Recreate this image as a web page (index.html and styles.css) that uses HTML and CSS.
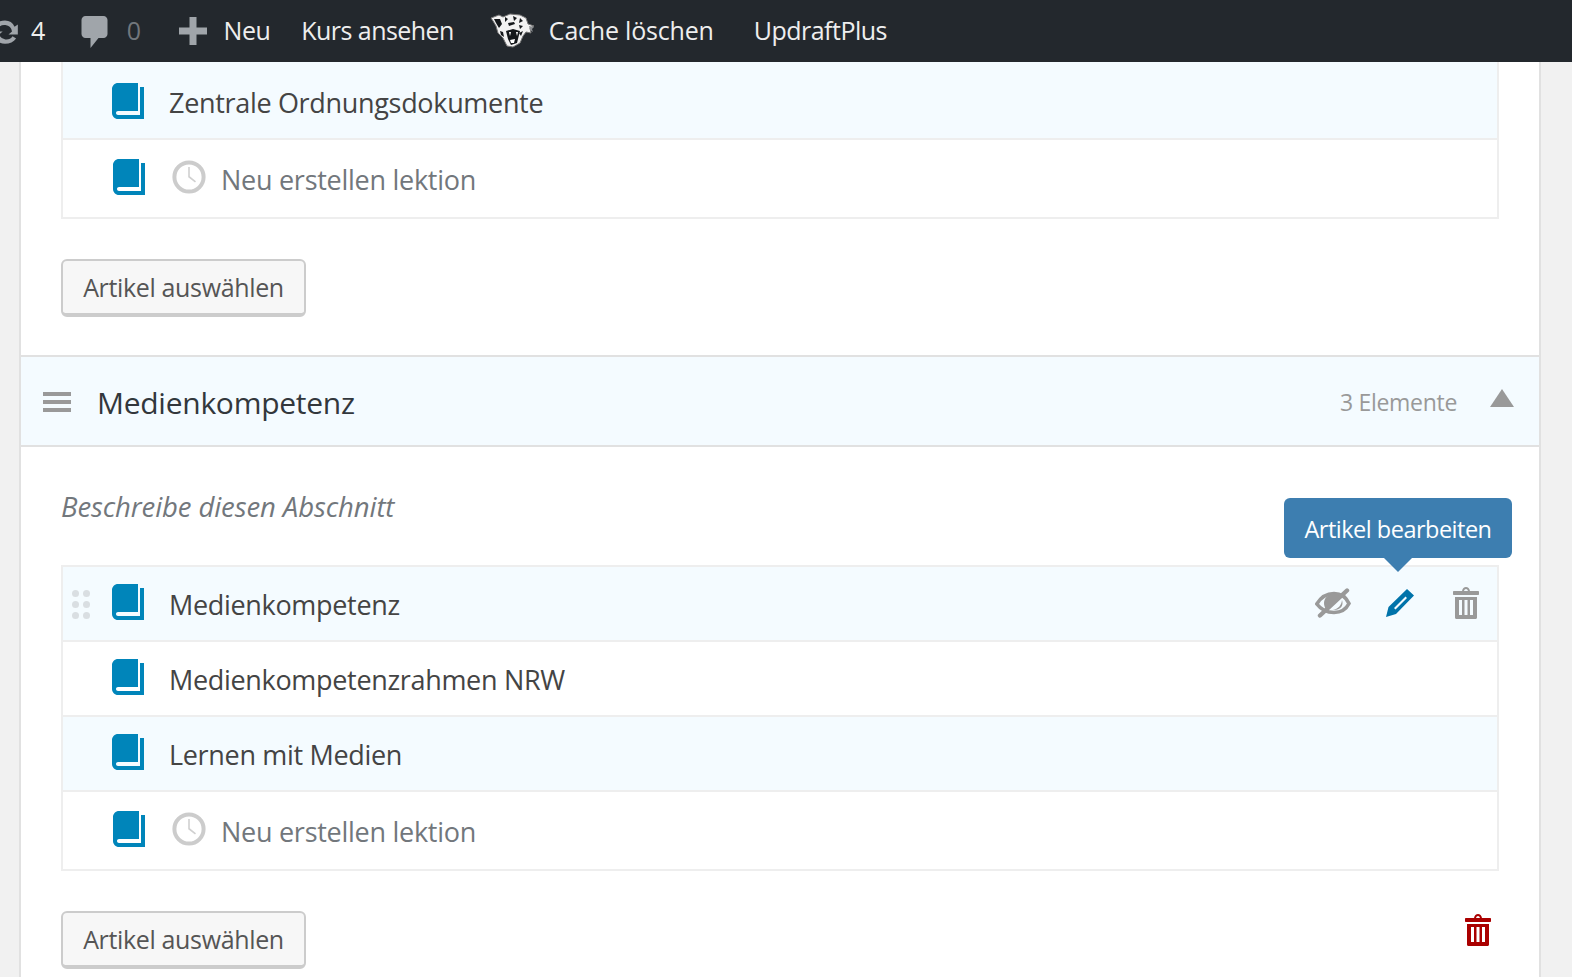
FILE: index.html
```html
<!DOCTYPE html>
<html lang="de">
<head>
<meta charset="utf-8">
<title>Kurs bearbeiten</title>
<link rel="stylesheet" href="styles.css">
</head>
<body>
<svg class="defs" width="0" height="0" aria-hidden="true">
  <symbol id="book" viewBox="2 1 16 18"><path d="M16 3h2v16H5c-1.66 0-3-1.34-3-3V4c0-1.66 1.34-3 3-3h10v14H5c-.55 0-1 .45-1 1s.45 1 1 1h11V3z"/></symbol>
  <symbol id="clock" viewBox="0 0 34 34"><circle cx="17" cy="17" r="14.600" fill="none" stroke="currentColor" stroke-width="4"/><path d="M16.200 7h1.600v9.300l6.200 5-1 1.300-6.800-5.400z"/></symbol>
  <symbol id="trash" viewBox="0 0 26 32"><path fill-rule="evenodd" d="M9 4C9.500 1.500 11 0 13 0s3.500 1.500 4 4h8c.6 0 1 .4 1 1v2c0 .6-.4 1-1 1H1c-.6 0-1-.4-1-1V5c0-.6.4-1 1-1zM11 4h4c-.4-1.200-1-2-2-2s-1.600.8-2 2zM2 10h22v20.500c0 .9-.6 1.500-1.500 1.500h-19C2.600 32 2 31.400 2 30.500zM6 13v15h3V13zM11.500 13v15h3V13zM17 13v15h3V13z"/></symbol>
</svg>

<header class="adminbar">
  <svg class="bar-update" viewBox="0 0 24 24"><path d="M12 3a9 9 0 0 1 8.200 5.300L23 6.500V15h-8l3-2.500A6.500 6.500 0 0 0 5.500 11L2 8.500C3.600 5 7.500 3 12 3zM2 21v-8.500h8L7 15a6.500 6.500 0 0 0 11.500 1.500l3 2C19.500 21.500 16 23 12 23a10 10 0 0 1-7.500-3.500z"/></svg>
  <span class="bar-count">4</span>
  <svg class="bar-comment" viewBox="0 0 26 32"><path d="M4 0h18c2.200 0 4 1.800 4 4v14c0 2.200-1.800 4-4 4H17l-8 10v-10H4c-2.200 0-4-1.800-4-4V4c0-2.200 1.800-4 4-4z"/></svg>
  <span class="bar-zero">0</span>
  <svg class="bar-plus" viewBox="0 0 28 28"><path d="M10.500 0h7v10.500H28v7H17.500V28h-7V17.500H0v-7h10.500z"/></svg>
  <span class="bar-neu">Neu</span>
  <span class="bar-kurs">Kurs ansehen</span>
  <svg class="bar-logo" viewBox="0 0 46 36">
    <path fill="#f2f2f2" stroke="#777" stroke-width="1" d="M1 5l8-3 4 2 7-3 10 1 6 3 2 6 6 2-4 2 1 5-5-1-3 4-3 7-7 4-6-1-4-8-5-5-2-7-3-5z"/>
    <path fill="#14171a" d="M4 6l6 0 2 5-3 4-3-5zM15 4l3 2-3 3zM23 3l4 2-3 3zM30 5l3 3-4 2zM18 10l6-1 1 2-6 2zM29 12l4 1-3 3zM10 18l3 1 1 5-3-2zM33 18l-2 5-2-3z"/>
    <path fill="#14171a" d="M16 18l7-2 7 2-3 12-6 2-3-6z"/>
    <path fill="#fff" d="M19 19l2 0-1 4zM26 19l2 0-1 4zM20 27l5-1-1 4-3 0z"/>
    <path fill="#8a8d90" d="M39 13l5 1-2 2 1 3-3-2z"/>
  </svg>
  <span class="bar-cache">Cache löschen</span>
  <span class="bar-updraft">UpdraftPlus</span>
</header>

<main class="panel">
  <section class="section-body section-first">
    <ul class="lessons lessons-open">
      <li class="row row-tint">
        <svg class="book"><use href="#book"/></svg>
        <span class="row-title">Zentrale Ordnungsdokumente</span>
      </li>
      <li class="row row-new">
        <svg class="book"><use href="#book"/></svg>
        <svg class="clock"><use href="#clock"/></svg>
        <span class="row-new-title">Neu erstellen lektion</span>
      </li>
    </ul>
    <div class="actions actions-first"><button class="btn">Artikel auswählen</button></div>
  </section>

  <section class="section-head">
    <span class="burger"><i></i><i></i><i></i></span>
    <h2 class="section-title">Medienkompetenz</h2>
    <span class="count">3 Elemente</span>
    <span class="toggle"></span>
  </section>

  <section class="section-body">
    <p class="desc">Beschreibe diesen Abschnitt</p>
    <ul class="lessons">
      <li class="row row-tint row-hover">
        <span class="drag"><i></i><i></i><i></i><i></i><i></i><i></i></span>
        <svg class="book"><use href="#book"/></svg>
        <span class="row-title">Medienkompetenz</span>
        <span class="row-tools">
          <svg class="tool-eye" viewBox="0 0 36 30"><path fill="none" stroke="currentColor" stroke-width="3.600" d="M1.800 16C6 9 12 5.500 19 5.500 26 5.500 31 9 34 15.500 31 21.500 26 24.500 19 24.500 12 24.500 6 21.500 1.800 16z"/><path fill="currentColor" d="M21 5.500C13 5.500 9 10 9 15c0 2 .6 4 1.700 5.800L26 7.200c-1.500-1-3.200-1.700-5-1.700zM27 12c-.5 5.500-4 9-9 10 7 .5 11-4 9-10z"/><path fill="none" stroke="currentColor" stroke-width="4.400" stroke-linecap="round" d="M32 2.500L5 27.500"/></svg>
          <svg class="tool-pen" viewBox="0 0 28 28"><path fill="currentColor" fill-rule="evenodd" d="M21 0l7 6.500L10 25 0 28l2.500-10zM19.500 7.500L8 19l1.500 1.500L21 9z"/></svg>
          <svg class="tool-trash"><use href="#trash"/></svg>
        </span>
        <span class="tooltip">Artikel bearbeiten</span>
      </li>
      <li class="row">
        <svg class="book"><use href="#book"/></svg>
        <span class="row-title">Medienkompetenzrahmen NRW</span>
      </li>
      <li class="row row-tint">
        <svg class="book"><use href="#book"/></svg>
        <span class="row-title">Lernen mit Medien</span>
      </li>
      <li class="row row-new">
        <svg class="book"><use href="#book"/></svg>
        <svg class="clock"><use href="#clock"/></svg>
        <span class="row-new-title">Neu erstellen lektion</span>
      </li>
    </ul>
    <div class="actions">
      <button class="btn">Artikel auswählen</button>
      <svg class="trash-red"><use href="#trash"/></svg>
    </div>
  </section>
</main>
</body>
</html>
```

FILE: styles.css
```css
* { box-sizing: border-box; }
html, body { margin: 0; height: 977px; overflow: hidden; background: #f1f1f1; }
body { font-family: "Open Sans", "Noto Sans", sans-serif; color: #444; }
.defs { position: absolute; }

.adminbar {
  height: 62px;
  background: #23282d;
  color: #eee;
  display: flex;
  align-items: center;
  font-size: 25px;
  letter-spacing: -0.5px;
  overflow: hidden;
}
.adminbar span { margin-top: -2px; }
.adminbar svg { flex: none; fill: #a0a5aa; }
.bar-update { width: 28px; height: 28px; margin-left: -9px; }
.bar-count { margin-left: 12px; }
.bar-comment { width: 27px; height: 32px; margin-left: 36px; margin-top: 1px; }
.bar-zero { margin-left: 19px; color: #72777c; }
.bar-plus { width: 28px; height: 28px; margin-left: 38px; }
.bar-neu { margin-left: 17px; }
.bar-kurs { margin-left: 31px; letter-spacing: -0.55px; }
.bar-logo { width: 46px; height: 36px; margin-left: 36px; }
.bar-cache { margin-left: 13px; letter-spacing: -0.2px; }
.bar-updraft { margin-left: 40px; }

.panel {
  margin-left: 19px;
  margin-right: 31px;
  height: 915px;
  background: #fff;
  border-left: 2px solid #e1e1e1;
  border-right: 2px solid #e1e1e1;
  overflow: hidden;
}
.section-body { padding: 0 40px; }
.section-first { padding-bottom: 38px; }

.lessons {
  list-style: none;
  margin: 0;
  padding: 0;
  border: 2px solid #eee;
}
.lessons-open { border-top: 0; }
.row {
  position: relative;
  height: 75px;
  display: flex;
  align-items: center;
  padding-left: 49px;
  border-top: 2px solid #eee;
  font-size: 27px;
  letter-spacing: -0.32px;
}
.row:first-child { border-top: 0; height: 73px; }
.lessons-open .row:first-child { height: 76px; padding-top: 2px; }
.row-tint { background: #f4fbff; }
.row-new { height: 79px; padding-left: 50px; padding-top: 1px; }
.row-new .book { margin-top: -5px; }
.book { width: 32px; height: 36px; fill: #0085ba; flex: none; margin-top: -3px; }
.lessons-open .row:first-child .book { margin-top: -1px; }
.row-title { margin-left: 25px; margin-top: 2px; color: #444; }
.clock { width: 34px; height: 34px; fill: #d0d0d0; color: #ccc; flex: none; margin-left: 27px; margin-top: -4px; }
.row-new-title { margin-left: 15px; color: #72777c; letter-spacing: -0.27px; }
.drag {
  position: absolute;
  left: 9px;
  top: 23px;
  display: grid;
  grid-template-columns: 7px 7px;
  gap: 4px;
}
.drag i { width: 7px; height: 7px; border-radius: 50%; background: #d9dee2; }
.row-tools {
  margin-left: auto;
  display: flex;
  align-items: center;
  padding-right: 18px;
  margin-top: -1px;
}
.tool-eye { width: 36px; height: 30px; color: #999; }
.tool-pen { width: 28px; height: 28px; color: #0073aa; margin-left: 35px; }
.tool-trash { width: 26px; height: 32px; fill: #999; margin-left: 39px; }
.tooltip {
  position: absolute;
  right: -15px;
  top: -69px;
  width: 228px;
  height: 60px;
  line-height: 62px;
  text-align: center;
  background: #3d7eb0;
  color: #fff;
  border-radius: 6px;
  font-size: 23.5px;
  letter-spacing: -0.5px;
}
.tooltip::after {
  content: "";
  position: absolute;
  left: 100px;
  top: 100%;
  border: 14px solid transparent;
  border-top-color: #3d7eb0;
  border-bottom: 0;
}

.actions {
  display: flex;
  justify-content: space-between;
  align-items: flex-start;
  margin-top: 40px;
}
.btn {
  width: 245px;
  height: 58px;
  padding: 0;
  background: #f7f7f7;
  border: 2px solid #ccc;
  border-bottom-width: 4px;
  border-radius: 6px;
  font: inherit;
  font-size: 25px;
  letter-spacing: -0.35px;
  color: #555;
}
.trash-red { width: 26px; height: 32px; fill: #a00; margin-right: 8px; margin-top: 3px; }

.section-head {
  height: 92px;
  display: flex;
  align-items: center;
  background: #f4fbff;
  border-top: 2px solid #e1e1e1;
  border-bottom: 2px solid #e1e1e1;
  padding: 2px 0 0 22px;
}
.burger { display: grid; gap: 4px; width: 28px; }
.burger i { display: block; height: 4px; background: #999; }
.section-title { margin: 0 0 0 26px; font-size: 30px; font-weight: 400; color: #32373c; letter-spacing: -0.27px; }
.count { margin-left: auto; font-size: 23px; color: #999; letter-spacing: -0.3px; }
.toggle {
  margin: -8px 25px 0 33px;
  border: 12px solid transparent;
  border-bottom: 18px solid #999;
  border-top: 0;
}
.desc {
  margin: 0;
  height: 118px;
  padding-top: 41px;
  font-size: 27.5px;
  font-style: italic;
  color: #72777c;
  letter-spacing: -0.1px;
}
```
